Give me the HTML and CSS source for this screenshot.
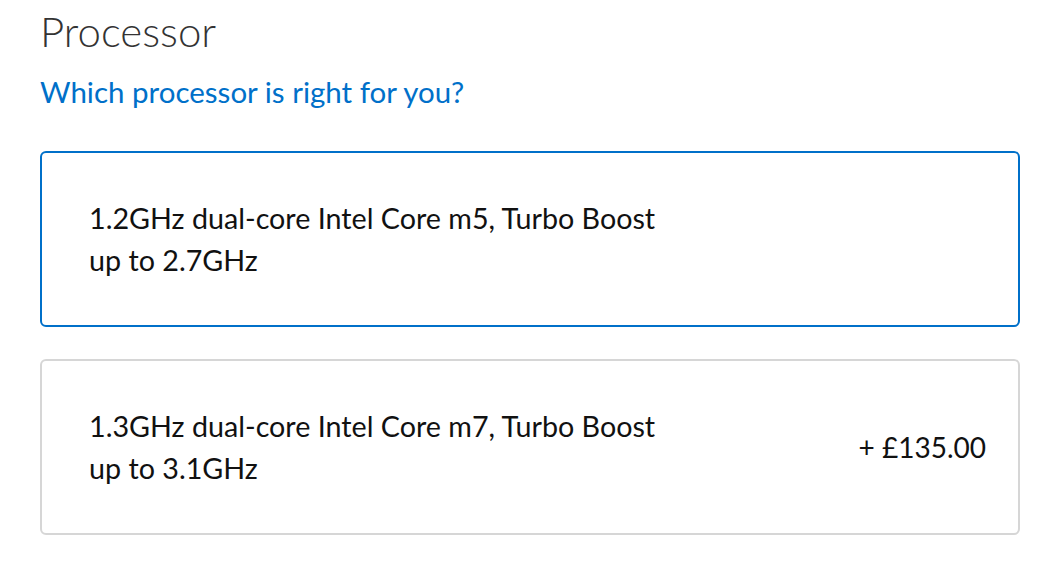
FILE: index.html
```html
<!DOCTYPE html>
<html lang="en">
<head>
<meta charset="utf-8">
<title>Processor</title>
<link rel="stylesheet" href="styles.css">
</head>
<body>
<main class="section">
  <h2 class="title">Processor</h2>
  <a class="help-link" href="#">Which processor is right for you?</a>
  <div class="options">
    <div class="option selected">
      <div class="option-label">1.2GHz dual-core Intel Core m5, Turbo Boost up to 2.7GHz</div>
    </div>
    <div class="option">
      <div class="option-label">1.3GHz dual-core Intel Core m7, Turbo Boost up to 3.1GHz</div>
      <div class="option-price">+ £135.00</div>
    </div>
  </div>
</main>
</body>
</html>
```

FILE: styles.css
```css
html, body {
  margin: 0;
  padding: 0;
  background: #ffffff;
}

body {
  font-family: "Lato", "Open Sans", "Liberation Sans", sans-serif;
  color: #111111;
}

.section {
  padding: 5px 32px 0 40px;
  display: flex;
  flex-direction: column;
}

.title {
  margin: 0;
  font-size: 42px;
  font-weight: 300;
  color: #333333;
  line-height: 52px;
}

.help-link {
  margin-top: 18px;
  font-size: 29.5px;
  line-height: 34px;
  color: #0070c9;
  text-decoration: none;
}

.options {
  margin-top: 42px;
  display: flex;
  flex-direction: column;
  gap: 32px;
}

.option {
  border: 2px solid #d6d6d6;
  border-radius: 6px;
  height: 176px;
  box-sizing: border-box;
  padding: 0 32px 0 47px;
  display: flex;
  align-items: center;
  justify-content: space-between;
}

.option.selected {
  border-color: #0070c9;
}

.option-label {
  max-width: 590px;
  font-size: 28.7px;
  line-height: 42px;
}

.option-price {
  font-size: 28px;
  line-height: 42px;
}
```
